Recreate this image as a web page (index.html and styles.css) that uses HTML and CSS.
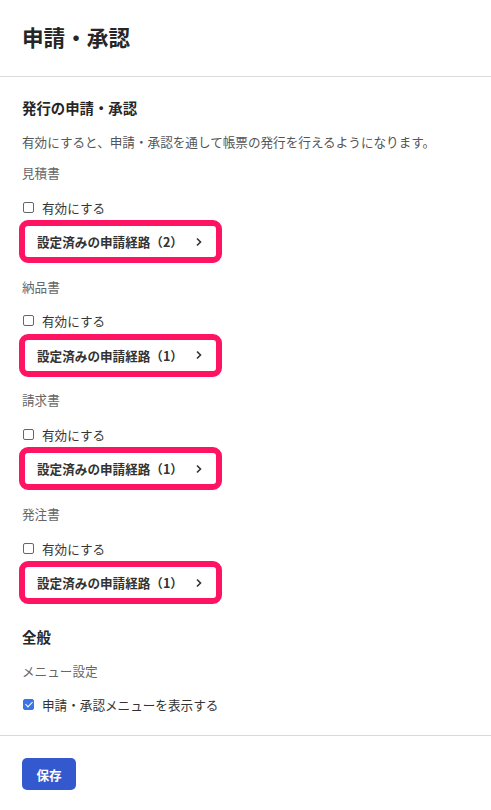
FILE: index.html
```html
<!DOCTYPE html>
<html lang="ja">
<head>
<meta charset="utf-8">
<title>申請・承認</title>
<link rel="stylesheet" href="styles.css">
</head>
<body>
<header class="page-header">
  <h1 class="page-title">申請・承認</h1>
</header>
<main class="content">
  <h2 class="section-title">発行の申請・承認</h2>
  <p class="description">有効にすると、申請・承認を通して帳票の発行を行えるようになります。</p>

  <div class="doc-group">
    <div class="doc-label">見積書</div>
    <label class="check-row"><input type="checkbox" class="check"><span>有効にする</span></label>
    <a class="route-btn"><span>設定済みの申請経路（2）</span><svg class="chev" viewBox="0 0 8 10" width="8" height="10"><path d="M2 1.5 L5.5 5 L2 8.5" fill="none" stroke="#333" stroke-width="1.6"/></svg></a>
  </div>
  <div class="doc-group">
    <div class="doc-label">納品書</div>
    <label class="check-row"><input type="checkbox" class="check"><span>有効にする</span></label>
    <a class="route-btn"><span>設定済みの申請経路（1）</span><svg class="chev" viewBox="0 0 8 10" width="8" height="10"><path d="M2 1.5 L5.5 5 L2 8.5" fill="none" stroke="#333" stroke-width="1.6"/></svg></a>
  </div>
  <div class="doc-group">
    <div class="doc-label">請求書</div>
    <label class="check-row"><input type="checkbox" class="check"><span>有効にする</span></label>
    <a class="route-btn"><span>設定済みの申請経路（1）</span><svg class="chev" viewBox="0 0 8 10" width="8" height="10"><path d="M2 1.5 L5.5 5 L2 8.5" fill="none" stroke="#333" stroke-width="1.6"/></svg></a>
  </div>
  <div class="doc-group">
    <div class="doc-label">発注書</div>
    <label class="check-row"><input type="checkbox" class="check"><span>有効にする</span></label>
    <a class="route-btn"><span>設定済みの申請経路（1）</span><svg class="chev" viewBox="0 0 8 10" width="8" height="10"><path d="M2 1.5 L5.5 5 L2 8.5" fill="none" stroke="#333" stroke-width="1.6"/></svg></a>
  </div>

  <h2 class="section-title general">全般</h2>
  <div class="doc-label menu-label">メニュー設定</div>
  <label class="check-row"><input type="checkbox" class="check" checked><span>申請・承認メニューを表示する</span></label>
</main>
<footer class="page-footer">
  <button class="save-btn" type="button">保存</button>
</footer>
</body>
</html>
```

FILE: styles.css
```css
* { box-sizing: border-box; }
html, body {
  margin: 0;
  padding: 0;
  background: #fff;
}
body {
  font-family: "Noto Sans CJK JP", "Noto Sans", sans-serif;
  color: #333;
  font-size: 12.6px;
}
.page-header {
  padding: 22px 22px 24px;
  border-bottom: 1px solid #d9d9d9;
}
.page-title {
  margin: 0;
  font-size: 21.6px;
  line-height: 30px;
  font-weight: 700;
  color: #262626;
}
.content {
  padding: 21px 22px 21px;
  border-bottom: 1px solid #d9d9d9;
}
.section-title {
  margin: 0;
  font-size: 14.4px;
  line-height: 20px;
  font-weight: 700;
  color: #262626;
}
.description {
  margin: 14px 0 11px;
  font-size: 12.6px;
  line-height: 20px;
  color: #555;
}
.doc-group {
  display: flex;
  flex-direction: column;
  align-items: flex-start;
  margin-bottom: 13.7px;
}
.doc-label {
  font-size: 12.6px;
  line-height: 20px;
  color: #666;
  margin-bottom: 14px;
}
.check-row {
  display: flex;
  align-items: center;
  gap: 8px;
  height: 20px;
  font-size: 12.6px;
  color: #333;
}
.check {
  appearance: none;
  -webkit-appearance: none;
  margin: 0 0 0 1px;
  width: 11px;
  height: 11px;
  border: 1px solid #666;
  border-radius: 2px;
  background: #fff;
  position: relative;
}
.check:checked {
  background: #3b74e8;
  border-color: #3b74e8;
}
.check:checked::after {
  content: "";
  position: absolute;
  left: 3px;
  top: 0.5px;
  width: 3px;
  height: 6px;
  border: solid #fff;
  border-width: 0 1.8px 1.8px 0;
  transform: rotate(45deg);
}
.route-btn {
  margin-top: 3px;
  display: flex;
  align-items: center;
  justify-content: space-between;
  width: 203px;
  height: 43px;
  margin-left: -3px;
  padding: 0 12px 0 12px;
  border: 6px solid #ff1463;
  border-radius: 9px;
  background: #fff;
  font-size: 12.6px;
  font-weight: 700;
  color: #333;
}
.chev { margin-right: 1px; }
.general {
  margin-top: 23px;
}
.menu-label {
  margin-top: 14px;
  margin-bottom: 13px;
}
.page-footer {
  padding: 22px 22px;
}
.save-btn {
  width: 54px;
  height: 32px;
  border: none;
  border-radius: 5px;
  background: #3459cf;
  color: #fff;
  font-family: "Noto Sans CJK JP", "Noto Sans", sans-serif;
  font-size: 12.6px;
  font-weight: 700;
  padding: 0;
}
```
